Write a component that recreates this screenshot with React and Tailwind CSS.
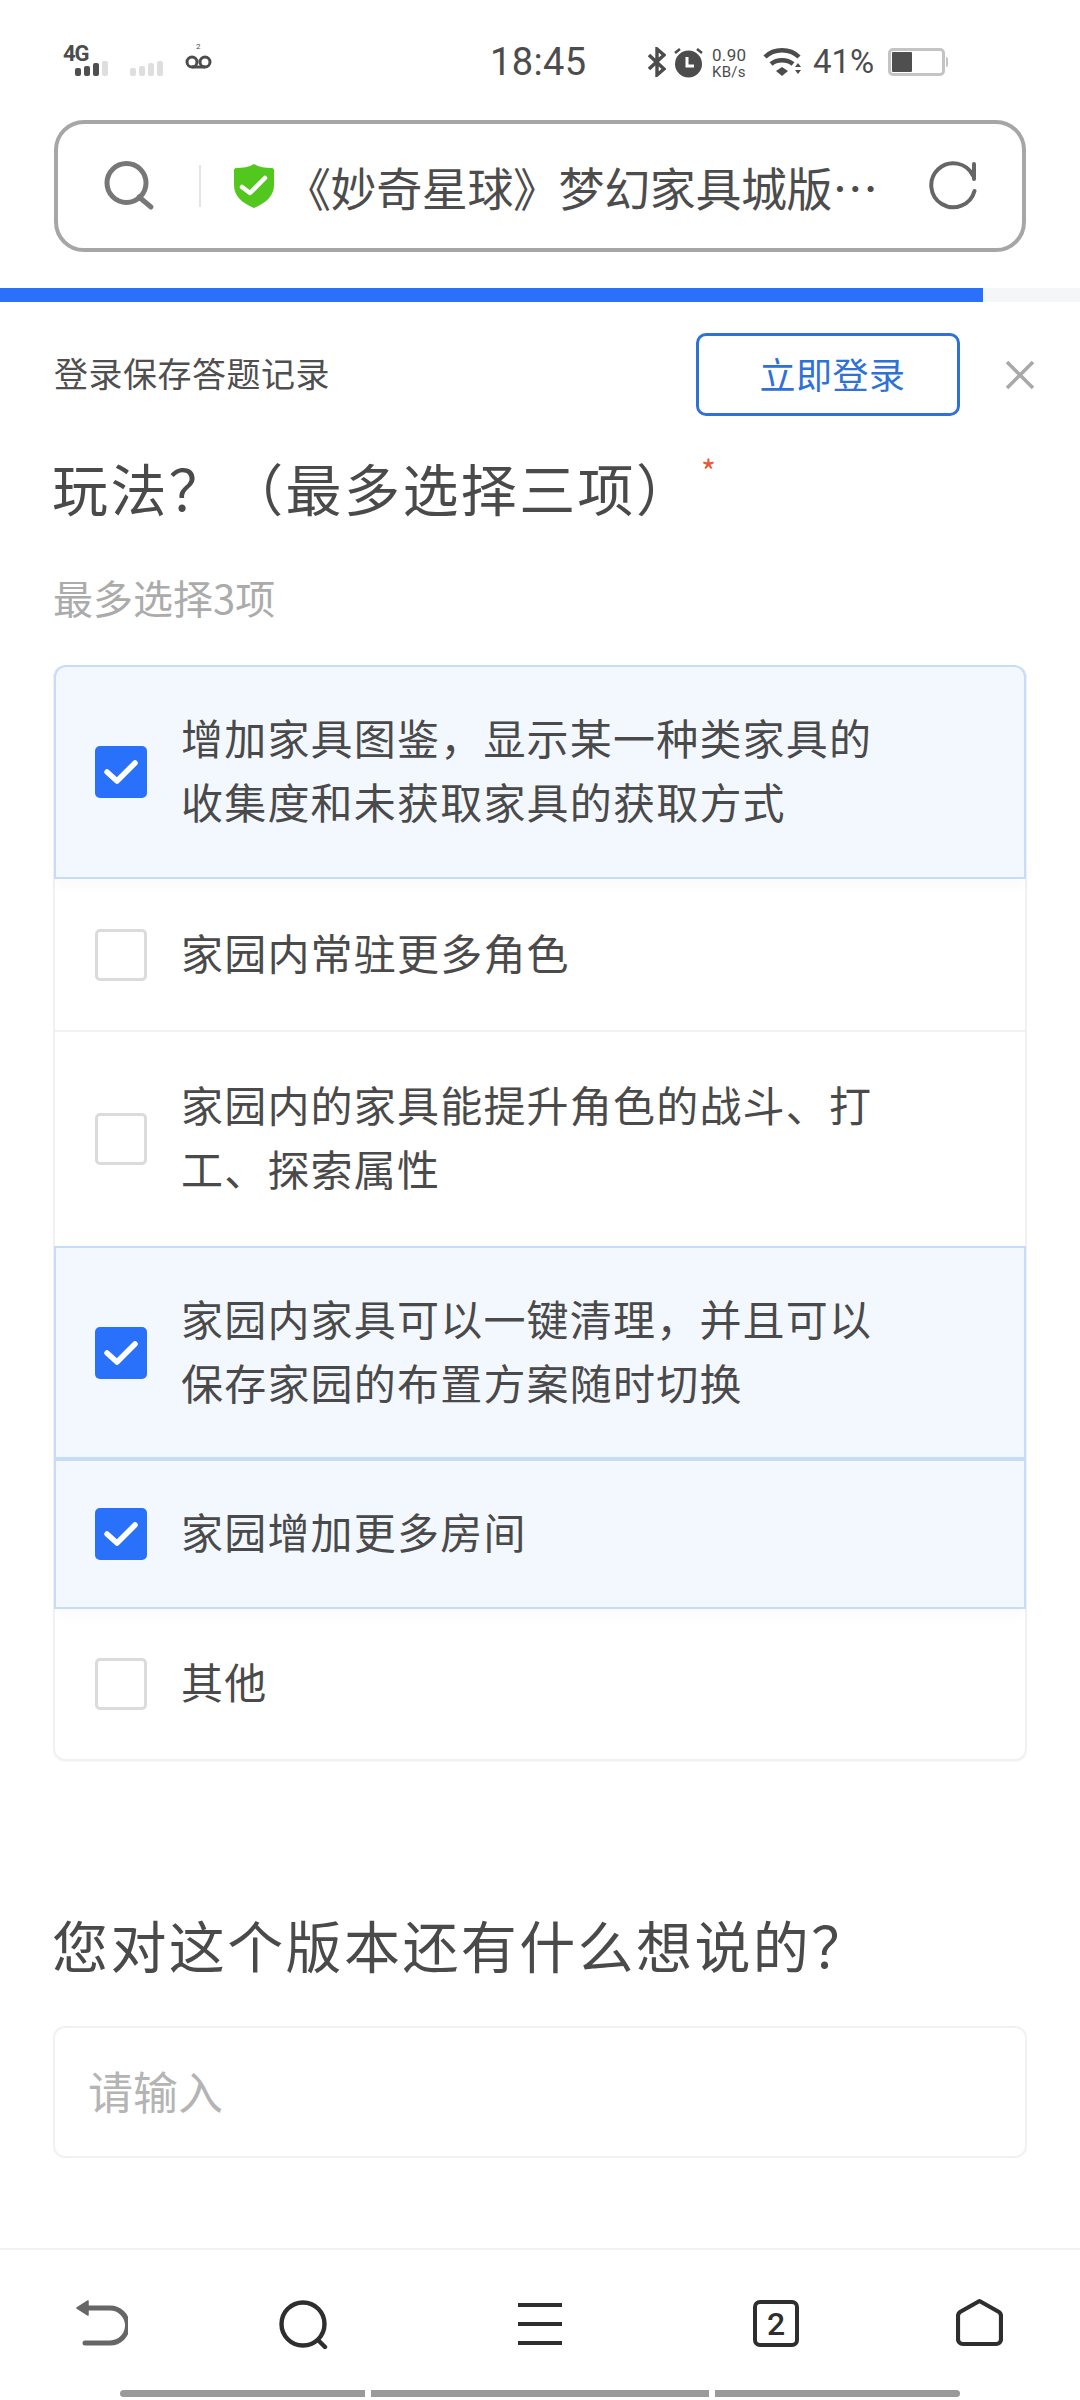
const font = { fontFamily: '"Noto Sans CJK SC", sans-serif' };

const options = [
  { lines: ["增加家具图鉴，显示某一种类家具的", "收集度和未获取家具的获取方式"], checked: true, h: "h-[214px]" },
  { lines: ["家园内常驻更多角色"], checked: false, h: "h-[153px]" },
  { lines: ["家园内的家具能提升角色的战斗、打", "工、探索属性"], checked: false, h: "h-[214px]" },
  { lines: ["家园内家具可以一键清理，并且可以", "保存家园的布置方案随时切换"], checked: true, h: "h-[213px]" },
  { lines: ["家园增加更多房间"], checked: true, h: "h-[150px]" },
  { lines: ["其他"], checked: false, h: "h-[150px]" },
];

function SignalBars({ levels }) {
  return (
    <div className="flex items-end gap-[3px]">
      {levels.map((on, i) => (
        <div
          key={i}
          className={
            (on ? "bg-[#4f4f4f] " : "bg-[#dedede] ") +
            (i === 0 ? "h-[8px] " : i === 1 ? "h-[10px] " : i === 2 ? "h-[13px] " : "h-[15px] ") +
            "w-[6px] rounded-[2px]"
          }
        />
      ))}
    </div>
  );
}

function StatusBar() {
  return (
    <div className="relative h-[120px] shrink-0 text-[#4c4c4c]" style={{ fontFamily: "Roboto, sans-serif" }}>
      <div className="flex h-[80px] items-end pl-[63px] pb-[4px]">
        <div className="flex w-[62px] flex-col">
          <span className="h-[17px] text-[22px] font-bold leading-[15px] tracking-[-1px]">4G</span>
          <div className="ml-[12px] mt-[-2px]">
            <SignalBars levels={[true, true, true, false]} />
          </div>
        </div>
        <div className="ml-[5px]">
          <SignalBars levels={[false, false, false, false]} />
        </div>
        <div className="relative ml-[22px] mb-[7px]">
          <span className="absolute left-[11px] top-[-13px] text-[8px] leading-[10px]">2</span>
          <svg width="27" height="14" viewBox="0 0 27 14" fill="none" stroke="#4c4c4c" strokeWidth="3">
            <circle cx="7" cy="7" r="5" />
            <circle cx="20" cy="7" r="5" />
            <path d="M7 12h13" />
          </svg>
        </div>
      </div>
      <span className="absolute left-[490px] top-[40px] text-[38px] leading-[44px] tracking-[0.4px]">18:45</span>
      <div className="absolute left-[648px] top-[47px] flex items-start">
        <svg width="18" height="30" viewBox="0 0 18 30" fill="none" stroke="#4c4c4c" strokeWidth="3.4">
          <path d="M1 8l15 14-7 6V2l7 6L1 22" />
        </svg>
        <svg className="ml-[7px]" width="31" height="31" viewBox="0 0 31 31">
          <circle cx="15.5" cy="17" r="13.5" fill="#4c4c4c" />
          <path d="M14 10v9h7" fill="none" stroke="#fff" strokeWidth="3" />
          <path d="M2 6l5-4M29 6l-5-4" stroke="#4c4c4c" strokeWidth="2.6" />
        </svg>
        <div className="ml-[8px] flex w-[40px] flex-col text-[17px] leading-[17px] tracking-[0.3px]">
          <span>0.90</span>
          <span className="text-[15px]">KB/s</span>
        </div>
        <svg className="ml-[11px] mt-[1px]" width="40" height="29" viewBox="0 0 40 29" fill="none" stroke="#4c4c4c" strokeWidth="4.5">
          <path d="M2 9c9-9 25-9 34 0" />
          <path d="M8 16c6-5 16-5 22 0" />
          <path d="M13 23l6-4 6 4-6 5z" fill="#4c4c4c" stroke="none" />
          <path d="M32 19l3-4 3 4zM32 22l3 4 3-4z" fill="#4c4c4c" stroke="none" />
        </svg>
        <span className="ml-[10px] mt-[-1px] text-[33px] leading-[32px]">41%</span>
        <div className="ml-[14px] mt-[1px] flex items-center">
          <div className="flex h-[28px] w-[57px] rounded-[5px] border-[3px] border-[#c4c4c4] p-[1px]">
            <div className="w-[20px] rounded-[1px] bg-[#4f4f4f]" />
          </div>
          <div className="ml-[1px] h-[10px] w-[2px] rounded-r bg-[#c4c4c4]" />
        </div>
      </div>
    </div>
  );
}

function SearchBar() {
  return (
    <div className="mx-[54px] flex h-[132px] shrink-0 items-center rounded-[30px] border-[4px] border-[#a6a6a6] bg-white">
      <svg className="ml-[46px] shrink-0" width="52" height="50" viewBox="0 0 52 50" fill="none" stroke="#777" strokeWidth="5">
        <circle cx="22.500" cy="22" r="19.500" />
        <path d="M35 36l12 10" strokeLinecap="round" />
      </svg>
      <div className="ml-[43px] h-[42px] w-[2px] shrink-0 bg-[#e4e4e4]" />
      <svg className="ml-[32px] shrink-0" width="42" height="46" viewBox="0 0 42 46">
        <path d="M21 1c5 3 11 4 18 4 1 0 2 1 2 2v15c0 11-8 18-20 23C9 40 1 33 1 22V7c0-1 1-2 2-2 7 0 13-1 18-4z" fill="#52c71d" />
        <path d="M9 24l8 6 15-15" fill="none" stroke="#fff" strokeWidth="4.500" strokeLinecap="round" strokeLinejoin="round" />
      </svg>
      <span className="ml-[10px] w-[620px] shrink-0 whitespace-nowrap text-[46px] leading-[60px] tracking-[-0.4px] text-[#4c4c4c]">
        《妙奇星球》梦幻家具城版…
      </span>
      <svg className="ml-[24px] shrink-0" width="50" height="50" viewBox="0 0 50 50" fill="none" stroke="#666" strokeWidth="4" strokeLinecap="round">
        <path d="M45.500 30A22 22 0 1 1 44 14.500" />
        <path d="M45 3v15" />
      </svg>
    </div>
  );
}

function Checkbox({ checked }) {
  if (checked) {
    return (
      <div className="flex h-[52px] w-[52px] shrink-0 items-center justify-center rounded-[5px] bg-[#2970fa]">
        <svg width="34" height="26" viewBox="0 0 34 26" fill="none" stroke="#fff" strokeWidth="5.500" strokeLinecap="round" strokeLinejoin="round">
          <path d="M3 13l10 9L31 4" />
        </svg>
      </div>
    );
  }
  return <div className="h-[52px] w-[52px] shrink-0 rounded-[5px] border-[3px] border-[#dbdbdb] bg-white" />;
}

function OptionRow({ option, index }) {
  const next = options[index + 1];
  let cls = "flex items-center " + option.h;
  if (option.checked) {
    cls += " mx-[-1px] pl-[39px] border-2 border-[#c7dcf7] bg-[#f3f8ff] relative z-10 shadow-[0_8px_12px_rgba(0,0,0,0.02)]";
  } else if (next && !next.checked) {
    cls += " pl-[40px] border-b-2 border-[#f1f1f1]";
  } else {
    cls += " pl-[40px]";
  }
  if (index === 0) cls += " rounded-t-[12px]";
  return (
    <div className={cls}>
      <Checkbox checked={option.checked} />
      <div className="ml-[34px] pb-[6px] text-[42px] leading-[64px] tracking-[1.2px] text-[#4a4a4a]">
        {option.lines.map((l) => (
          <div key={l} className="whitespace-nowrap">{l}</div>
        ))}
      </div>
    </div>
  );
}

function BottomNav() {
  return (
    <div className="mt-auto shrink-0 border-t-2 border-[#f3f3f3]">
      <div className="relative h-[140px]">
        <svg className="absolute left-[74px] top-[50px]" width="54" height="48" viewBox="0 0 54 48" fill="none" stroke="#666" strokeWidth="5" strokeLinecap="round">
          <path d="M12 8h24a17.500 17.500 0 0 1 0 35H11" />
          <path d="M14 1v14L3 8z" fill="#666" strokeWidth="1.500" strokeLinejoin="round" />
        </svg>
        <svg className="absolute left-[279px] top-[50px]" width="50" height="50" viewBox="0 0 50 50" fill="none" stroke="#2e2e2e" strokeWidth="4.400">
          <circle cx="24" cy="24" r="21.500" />
          <path d="M39 40l7 7" strokeLinecap="round" />
        </svg>
        <div className="absolute left-[518px] top-[53px] flex h-[42px] w-[44px] flex-col justify-between">
          <div className="h-[4px] bg-[#2e2e2e]" />
          <div className="h-[4px] bg-[#2e2e2e]" />
          <div className="h-[4px] bg-[#2e2e2e]" />
        </div>
        <div
          className="absolute left-[753px] top-[50px] flex h-[47px] w-[46px] items-center justify-center rounded-[7px] border-[4px] border-[#2e2e2e] text-[32px] font-medium text-[#2e2e2e]"
          style={{ fontFamily: "Roboto, sans-serif" }}
        >
          2
        </div>
        <svg className="absolute left-[956px] top-[48px]" width="47" height="50" viewBox="0 0 47 50" fill="none" stroke="#2e2e2e" strokeWidth="4.200" strokeLinejoin="round">
          <path d="M23.500 3L43 14c1.500 1 2 2 2 4v23c0 3-2 5-5 5H7c-3 0-5-2-5-5V18c0-2 .5-3 2-4z" />
        </svg>
      </div>
      <div className="flex h-[10px] justify-center gap-[6px] bg-white">
        <div className="h-[7px] w-[245px] rounded-l-full bg-[#9a9a9a]" />
        <div className="h-[7px] w-[338px] bg-[#9a9a9a]" />
        <div className="h-[7px] w-[245px] rounded-r-full bg-[#9a9a9a]" />
      </div>
    </div>
  );
}

export default function App() {
  return (
    <div className="flex h-[2400px] w-[1080px] flex-col overflow-hidden bg-white" style={font}>
      <StatusBar />
      <SearchBar />
      <div className="mt-[36px] flex h-[14px] shrink-0 bg-[#f5f6f7]">
        <div className="w-[983px] bg-[#2b70fa]" />
      </div>
      <div className="mt-[31px] flex h-[83px] shrink-0 items-center pl-[54px]">
        <span className="w-[642px] pb-[4px] text-[34px] tracking-[0.5px] text-[#4f4f4f]">登录保存答题记录</span>
        <div className="flex h-[83px] w-[264px] items-center justify-center rounded-[10px] border-[3px] border-[#2f72d6] pb-[4px] pl-[9px] text-[36px] tracking-[0.5px] text-[#2f72d6]">
          立即登录
        </div>
        <svg className="ml-[45px]" width="30" height="30" viewBox="0 0 30 30" stroke="#a9a9a9" strokeWidth="3.600">
          <path d="M2 2l26 26M28 2L2 28" />
        </svg>
      </div>
      <div className="relative mt-[35px] pl-[52px] text-[56px] leading-[72px] tracking-[2.400px] text-[#4a4a4a]">
        玩法？（最多选择三项）
        <span className="absolute left-[701px] top-[-6px] text-[32px] leading-[50px] text-[#e8593c]">*</span>
      </div>
      <div className="mt-[50px] pl-[53px] text-[40px] leading-[48px] text-[#ababab]">最多选择3项</div>
      <div className="mx-[53px] mt-[44px] shrink-0 rounded-[12px] border-x-2 border-b-2 border-[#f1f1f1] shadow-[0_1px_1px_rgba(0,0,0,0.03)]">
        {options.map((o, i) => (
          <OptionRow key={i} option={o} index={i} />
        ))}
      </div>
      <div className="mt-[147px] pl-[52px] text-[56px] leading-[72px] tracking-[2.400px] text-[#4a4a4a]">
        您对这个版本还有什么想说的？
      </div>
      <div className="mx-[53px] mt-[46px] flex h-[132px] shrink-0 items-center rounded-[12px] border-2 border-[#f1f1f1] pb-[2px] pl-[33px] text-[45px] text-[#b4b4b4]">
        请输入
      </div>
      <BottomNav />
    </div>
  );
}
